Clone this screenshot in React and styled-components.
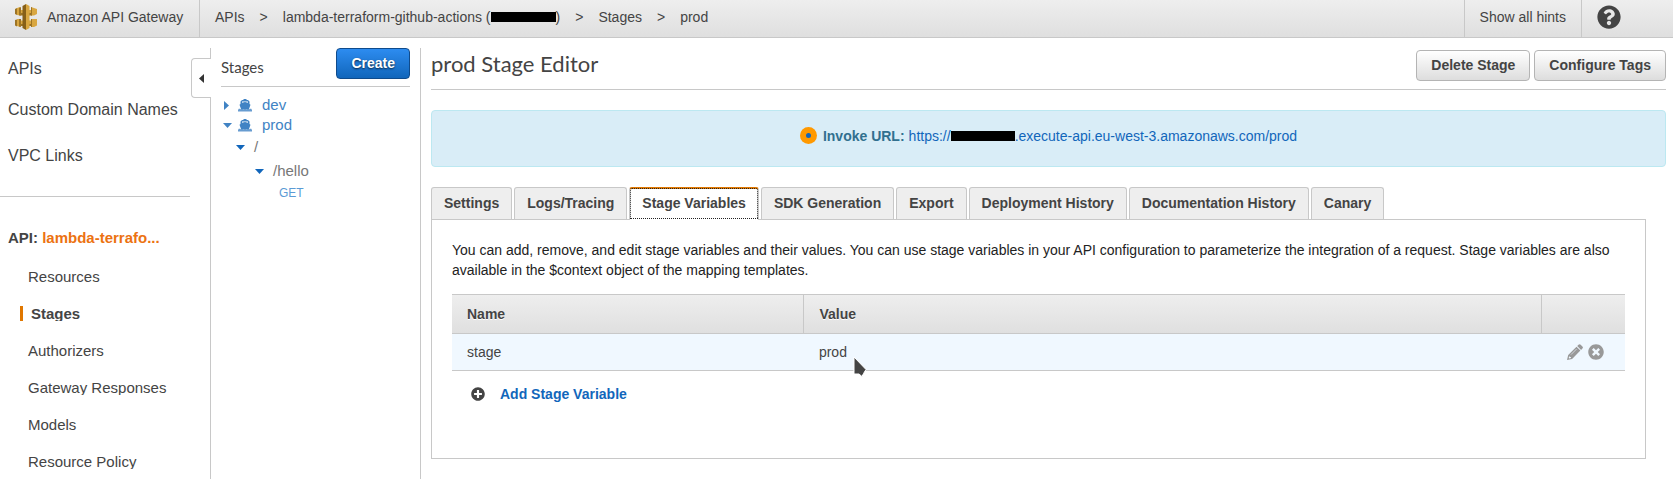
import React from 'react';
import styled, { createGlobalStyle, css } from 'styled-components';
import { FaQuestionCircle, FaPlusCircle, FaTimesCircle } from 'react-icons/fa';

const GlobalStyle = createGlobalStyle`
  *, *::before, *::after { box-sizing: border-box; }
  body {
    margin: 0;
    background: #fff;
    color: #444;
    font: 14px/20px "Liberation Sans", Arial, sans-serif;
  }
  a { color: inherit; text-decoration: none; }
  button { font: inherit; color: inherit; cursor: pointer; }
  h1, h2, p, ul, ol { margin: 0; padding: 0; font-weight: normal; list-style: none; }
`;

const line = '#c8c8c8';

const TopBar = styled.header`
  display: flex;
  height: 38px;
  background: linear-gradient(#eee, #dfdfdf);
  border-bottom: 1px solid ${line};
`;

const Brand = styled.a`
  display: flex;
  align-items: center;
  gap: 8px;
  width: 200px;
  padding: 0 0 4px 13px;
  border-right: 1px solid ${line};
`;

const Crumbs = styled.ol`
  display: flex;
  flex: 1;
  gap: 15px;
  padding: 7px 15px;
`;

const HintsButton = styled.button`
  padding: 0 15px 3px;
  border: solid ${line};
  border-width: 0 1px;
  background: none;
`;

const HelpButton = styled.button`
  display: flex;
  width: 91px;
  padding: 5px 15px;
  border: 0;
  background: none;
`;

const Redacted = styled.span`
  display: inline-block;
  width: ${(p) => p.$width}px;
  height: 10px;
  background: #000;
`;

const Layout = styled.div`
  display: flex;
  min-height: calc(100vh - 38px);
  padding-top: 10px;
`;

const Sidebar = styled.nav`
  position: relative;
  flex: none;
  width: 211px;
  border-right: 1px solid ${line};
`;

const CollapseHandle = styled.button`
  position: absolute;
  top: 10px;
  right: -1px;
  display: flex;
  align-items: center;
  justify-content: center;
  width: 20px;
  height: 40px;
  padding: 0;
  border: 1px solid ${line};
  border-right: 0;
  border-radius: 4px 0 0 4px;
  background: #fff;
`;

const PrimaryLinks = styled.ul`
  width: 190px;
  padding: 11px 0 30px 8px;
  border-bottom: 1px solid ${line};
  font-size: 16px;
  li + li { margin-top: 21px; }
  li:last-child { margin-top: 26px; }
`;

const ApiName = styled.h2`
  padding: 31px 8px 0;
  font-size: 15px;
  font-weight: bold;
  a { color: #ec7211; }
`;

const ApiLinks = styled.ul`
  display: flex;
  flex-direction: column;
  gap: 22px;
  padding: 21px 0 10px 20px;
  font-size: 15px;
  line-height: 15px;
`;

const ApiLink = styled.a`
  display: block;
  overflow: hidden;
  padding-left: 8px;
  ${(p) => p.$active && css`
    border-left: 3px solid #e07700;
    font-weight: bold;
  `}
`;

const StagesPane = styled.section`
  flex: none;
  width: 210px;
  padding: 0 10px;
  border-right: 1px solid ${line};
`;

const StagesHead = styled.div`
  display: flex;
  justify-content: space-between;
  height: 39px;
  border-bottom: 1px solid ${line};
  h2 {
    font: 15px/20px Lato, sans-serif;
    padding-top: 9px;
  }
`;

const Button = styled.button`
  height: 31px;
  padding: 0 14px 2px;
  border: 1px solid #b4b4b4;
  border-radius: 4px;
  background: linear-gradient(#fff, #ddd);
  font-weight: bold;
  ${(p) => p.$primary && css`
    border-color: #0f4b8c;
    background: linear-gradient(#2d8cf0, #1166bb);
    color: #fff;
    text-shadow: 0 1px 2px rgba(0, 0, 0, 0.7);
  `}
`;

const Tree = styled.ul`
  padding-top: 8px;
  font-size: 15px;
`;

const TreeRow = styled.a`
  display: flex;
  align-items: center;
  gap: ${(p) => (p.$path ? 9 : 6)}px;
  height: ${(p) => (p.$path ? 24 : 20)}px;
  padding-left: ${(p) => p.$indent}px;
  color: ${(p) => (p.$path ? '#777' : '#4183c4')};
`;

const Method = styled.a`
  display: block;
  padding-left: 58px;
  color: #5b9bd5;
  font-size: 12px;
`;

const ShipSvg = styled.svg`
  margin-right: 4px;
`;

const Main = styled.main`
  flex: 1;
  min-width: 0;
  padding: 0 7px 20px 10px;
`;

const TitleRow = styled.div`
  display: flex;
  align-items: flex-start;
  gap: 4px;
  padding: 2px 0 8px;
  border-bottom: 1px solid ${line};
  h1 {
    flex: 1;
    font: 22px/28px Lato, sans-serif;
  }
`;

const InvokeBanner = styled.div`
  display: flex;
  justify-content: center;
  align-items: flex-start;
  gap: 4px;
  height: 57px;
  margin: 20px 0;
  padding-top: 15px;
  border: 1px solid #bce8f1;
  border-radius: 4px;
  background: #d9edf7;
  strong { color: #31708f; }
  a { color: #1166bb; }
  svg { margin: 1px 2px 0 0; }
`;

const Tabs = styled.div`
  display: flex;
  gap: 2px;
`;

const Tab = styled.button`
  height: 32px;
  padding: 0 12px 1px;
  border: 1px solid ${line};
  border-bottom: 0;
  border-radius: 3px 3px 0 0;
  background: #eee;
  font-weight: bold;
  ${(p) => p.$active && css`
    position: relative;
    height: 33px;
    margin-bottom: -1px;
    border-top: 2px solid #e07700;
    background: #fff;
    padding-bottom: 3px;
    outline: 1px dotted #222;
    outline-offset: -2px;
  `}
`;

const Panel = styled.section`
  margin-right: 20px;
  padding: 20px 20px 41px;
  border: 1px solid ${line};
  p { margin-bottom: 14px; color: #222; }
`;

const Table = styled.table`
  width: 100%;
  border-collapse: collapse;
  table-layout: fixed;
  text-align: left;
  th {
    height: 39px;
    padding: 0 15px;
    border: solid ${line};
    border-width: 1px 0 1px 1px;
    text-shadow: 0 1px 0 #fff;
  }
  th:first-child { border-left: 0; width: 30%; }
  th:last-child { width: 84px; }
  thead { background: linear-gradient(#eee, #dfdfdf); }
  td {
    position: relative;
    height: 37px;
    padding: 0 15px;
    border-bottom: 1px solid ${line};
    background: #f0f8ff;
  }
`;

const RowActions = styled.div`
  display: flex;
  justify-content: flex-end;
  gap: 5px;
  padding-right: 6px;
  color: #999;
  button { display: flex; padding: 0; border: 0; background: none; }
`;

const Pointer = styled.svg`
  position: absolute;
  top: 22px;
  left: 48px;
`;

const AddRow = styled.button`
  display: flex;
  align-items: center;
  gap: 15px;
  padding: 13px 19px;
  border: 0;
  background: none;
  color: #1166bb;
  font-weight: bold;
  svg { color: #444; }
`;

const Arrow = ({ dir, color = '#1166bb' }) => (
  <svg width="9" height="9" viewBox="0 0 9 9" fill={color} aria-hidden="true">
    {dir === 'right' && <path d="M1 0l5 4.500-5 4.500z" />}
    {dir === 'down' && <path d="M0 2h9L4.500 7z" />}
    {dir === 'left' && <path d="M7 0v9L2 4.500z" />}
  </svg>
);

const ShipIcon = () => (
  <ShipSvg width="14" height="13" viewBox="0 0 14 13" fill="#4183c4" aria-hidden="true">
    <path d="M5.500 0h3v1H10l1.500 1.500V5l1 .8L11 10H3L1.500 5.800l1-.8V2.500L4 1h1.500zM4 2.500v1.200l3-.7 3 .7V2.500z" fillRule="evenodd" />
    <path d="M1 9.500l1.500.7L4 9.500l1.500.7 1.500-.7 1.500.7 1.500-.7 1.500.7 1.500-.7 1 1.500v1.500H0V11z" opacity="0.8" />
  </ShipSvg>
);

const PencilIcon = () => (
  <svg width="16" height="16" viewBox="0 0 16 16" fill="currentColor" aria-hidden="true">
    <path d="M11.500.8c.7-.8 1.500-.8 2.200-.1l1.700 1.700c.7.700.7 1.500 0 2.200l-1.300 1.300-3.900-3.900zM9.500 2.700l3.900 3.900-8.300 8.300L0 16l1.200-5zM2.200 12.400l-.5 1.700.6.500 1.600-.5v-1H3v-.7z" fillRule="evenodd" />
    <path d="M4 10.600l5.600-5.600" stroke="#f0f8ff" strokeWidth="0.600" />
  </svg>
);

const Logo = () => (
  <svg width="26" height="28" viewBox="0 0 26 28" aria-hidden="true">
    <path fill="#9d7425" d="M2 6l2-1v7l-2-1zM2 17l2-.5v7l-2-1zM7 9h12v3.500H7zM7 20h12v3H7z" />
    <path fill="#d9a741" d="M4 5l3-1v8.500l-3-.5zM18 4l3 1 3 1v5l-3 1.500h-3zM4 16h3v8l-3-1zM18 16h6v6.500L21 24h-3zM7 7h11v3H7zM7 17.500h11V21H7z" />
    <path fill="#876018" d="M9.500 3L13 1v26l-3.500-2z" />
    <path fill="#d9a741" d="M13 1l3.500 2v22L13 27z" />
    <path fill="#9d7425" d="M6 5l2-1v8.500H6zM6 16h2v8l-2-.5zM18 4l1 .5v8h-1zM18 16h1v8h-1z" />
  </svg>
);

const tabs = ['Settings', 'Logs/Tracing', 'Stage Variables', 'SDK Generation', 'Export', 'Deployment History', 'Documentation History', 'Canary'];
const apiLinks = ['Resources', 'Stages', 'Authorizers', 'Gateway Responses', 'Models', 'Resource Policy'];

export default function App() {
  return (
    <>
      <GlobalStyle />
      <TopBar>
        <Brand href="#"><Logo />Amazon API Gateway</Brand>
        <Crumbs>
          <li><a href="#">APIs</a></li>
          <li>&gt;</li>
          <li><a href="#">lambda-terraform-github-actions (<Redacted $width={65} />)</a></li>
          <li>&gt;</li>
          <li><a href="#">Stages</a></li>
          <li>&gt;</li>
          <li>prod</li>
        </Crumbs>
        <HintsButton>Show all hints</HintsButton>
        <HelpButton aria-label="Help"><FaQuestionCircle size={24} /></HelpButton>
      </TopBar>
      <Layout>
        <Sidebar>
          <PrimaryLinks>
            <li><a href="#">APIs</a></li>
            <li><a href="#">Custom Domain Names</a></li>
            <li><a href="#">VPC Links</a></li>
          </PrimaryLinks>
          <ApiName>API: <a href="#">lambda-terrafo...</a></ApiName>
          <ApiLinks>
            {apiLinks.map((name) => (
              <li key={name}><ApiLink href="#" $active={name === 'Stages'}>{name}</ApiLink></li>
            ))}
          </ApiLinks>
          <CollapseHandle aria-label="Collapse navigation"><Arrow dir="left" color="#333" /></CollapseHandle>
        </Sidebar>
        <StagesPane>
          <StagesHead>
            <h2>Stages</h2>
            <Button $primary>Create</Button>
          </StagesHead>
          <Tree>
            <li><TreeRow href="#" $indent={2}><Arrow dir="right" color="#4183c4" /><ShipIcon />dev</TreeRow></li>
            <li><TreeRow href="#" $indent={2}><Arrow dir="down" color="#4183c4" /><ShipIcon />prod</TreeRow></li>
            <li><TreeRow href="#" $indent={15} $path><Arrow dir="down" />/</TreeRow></li>
            <li><TreeRow href="#" $indent={34} $path><Arrow dir="down" />/hello</TreeRow></li>
            <li><Method href="#">GET</Method></li>
          </Tree>
        </StagesPane>
        <Main>
          <TitleRow>
            <h1>prod Stage Editor</h1>
            <Button>Delete Stage</Button>
            <Button>Configure Tags</Button>
          </TitleRow>
          <InvokeBanner>
            <svg width="17" height="17" viewBox="0 0 17 17" aria-hidden="true">
              <circle cx="8.500" cy="8.500" r="8.500" fill="#f90" />
              <circle cx="8.500" cy="8.500" r="2.500" fill="#1166bb" />
            </svg>
            <strong>Invoke URL:</strong>
            <a href="#">https://<Redacted $width={64} />.execute-api.eu-west-3.amazonaws.com/prod</a>
          </InvokeBanner>
          <Tabs role="tablist">
            {tabs.map((name) => (
              <Tab key={name} role="tab" aria-selected={name === 'Stage Variables'} $active={name === 'Stage Variables'}>{name}</Tab>
            ))}
          </Tabs>
          <Panel>
            <p>
              You can add, remove, and edit stage variables and their values. You can use stage variables in your API
              configuration to parameterize the integration of a request. Stage variables are also available in the
              $context object of the mapping templates.
            </p>
            <Table>
              <thead>
                <tr><th>Name</th><th>Value</th><th aria-label="Actions" /></tr>
              </thead>
              <tbody>
                <tr>
                  <td>stage</td>
                  <td>
                    prod
                    <Pointer width="16" height="22" viewBox="0 0 16 22" aria-hidden="true">
                      <path d="M2 1v17h5l3 2.500 1.500-3 2.500-4z" fill="#444" stroke="#fff" strokeWidth="1" />
                    </Pointer>
                  </td>
                  <td>
                    <RowActions>
                      <button aria-label="Edit"><PencilIcon /></button>
                      <button aria-label="Delete"><FaTimesCircle size={16} /></button>
                    </RowActions>
                  </td>
                </tr>
              </tbody>
            </Table>
            <AddRow><FaPlusCircle size={14} />Add Stage Variable</AddRow>
          </Panel>
        </Main>
      </Layout>
    </>
  );
}
